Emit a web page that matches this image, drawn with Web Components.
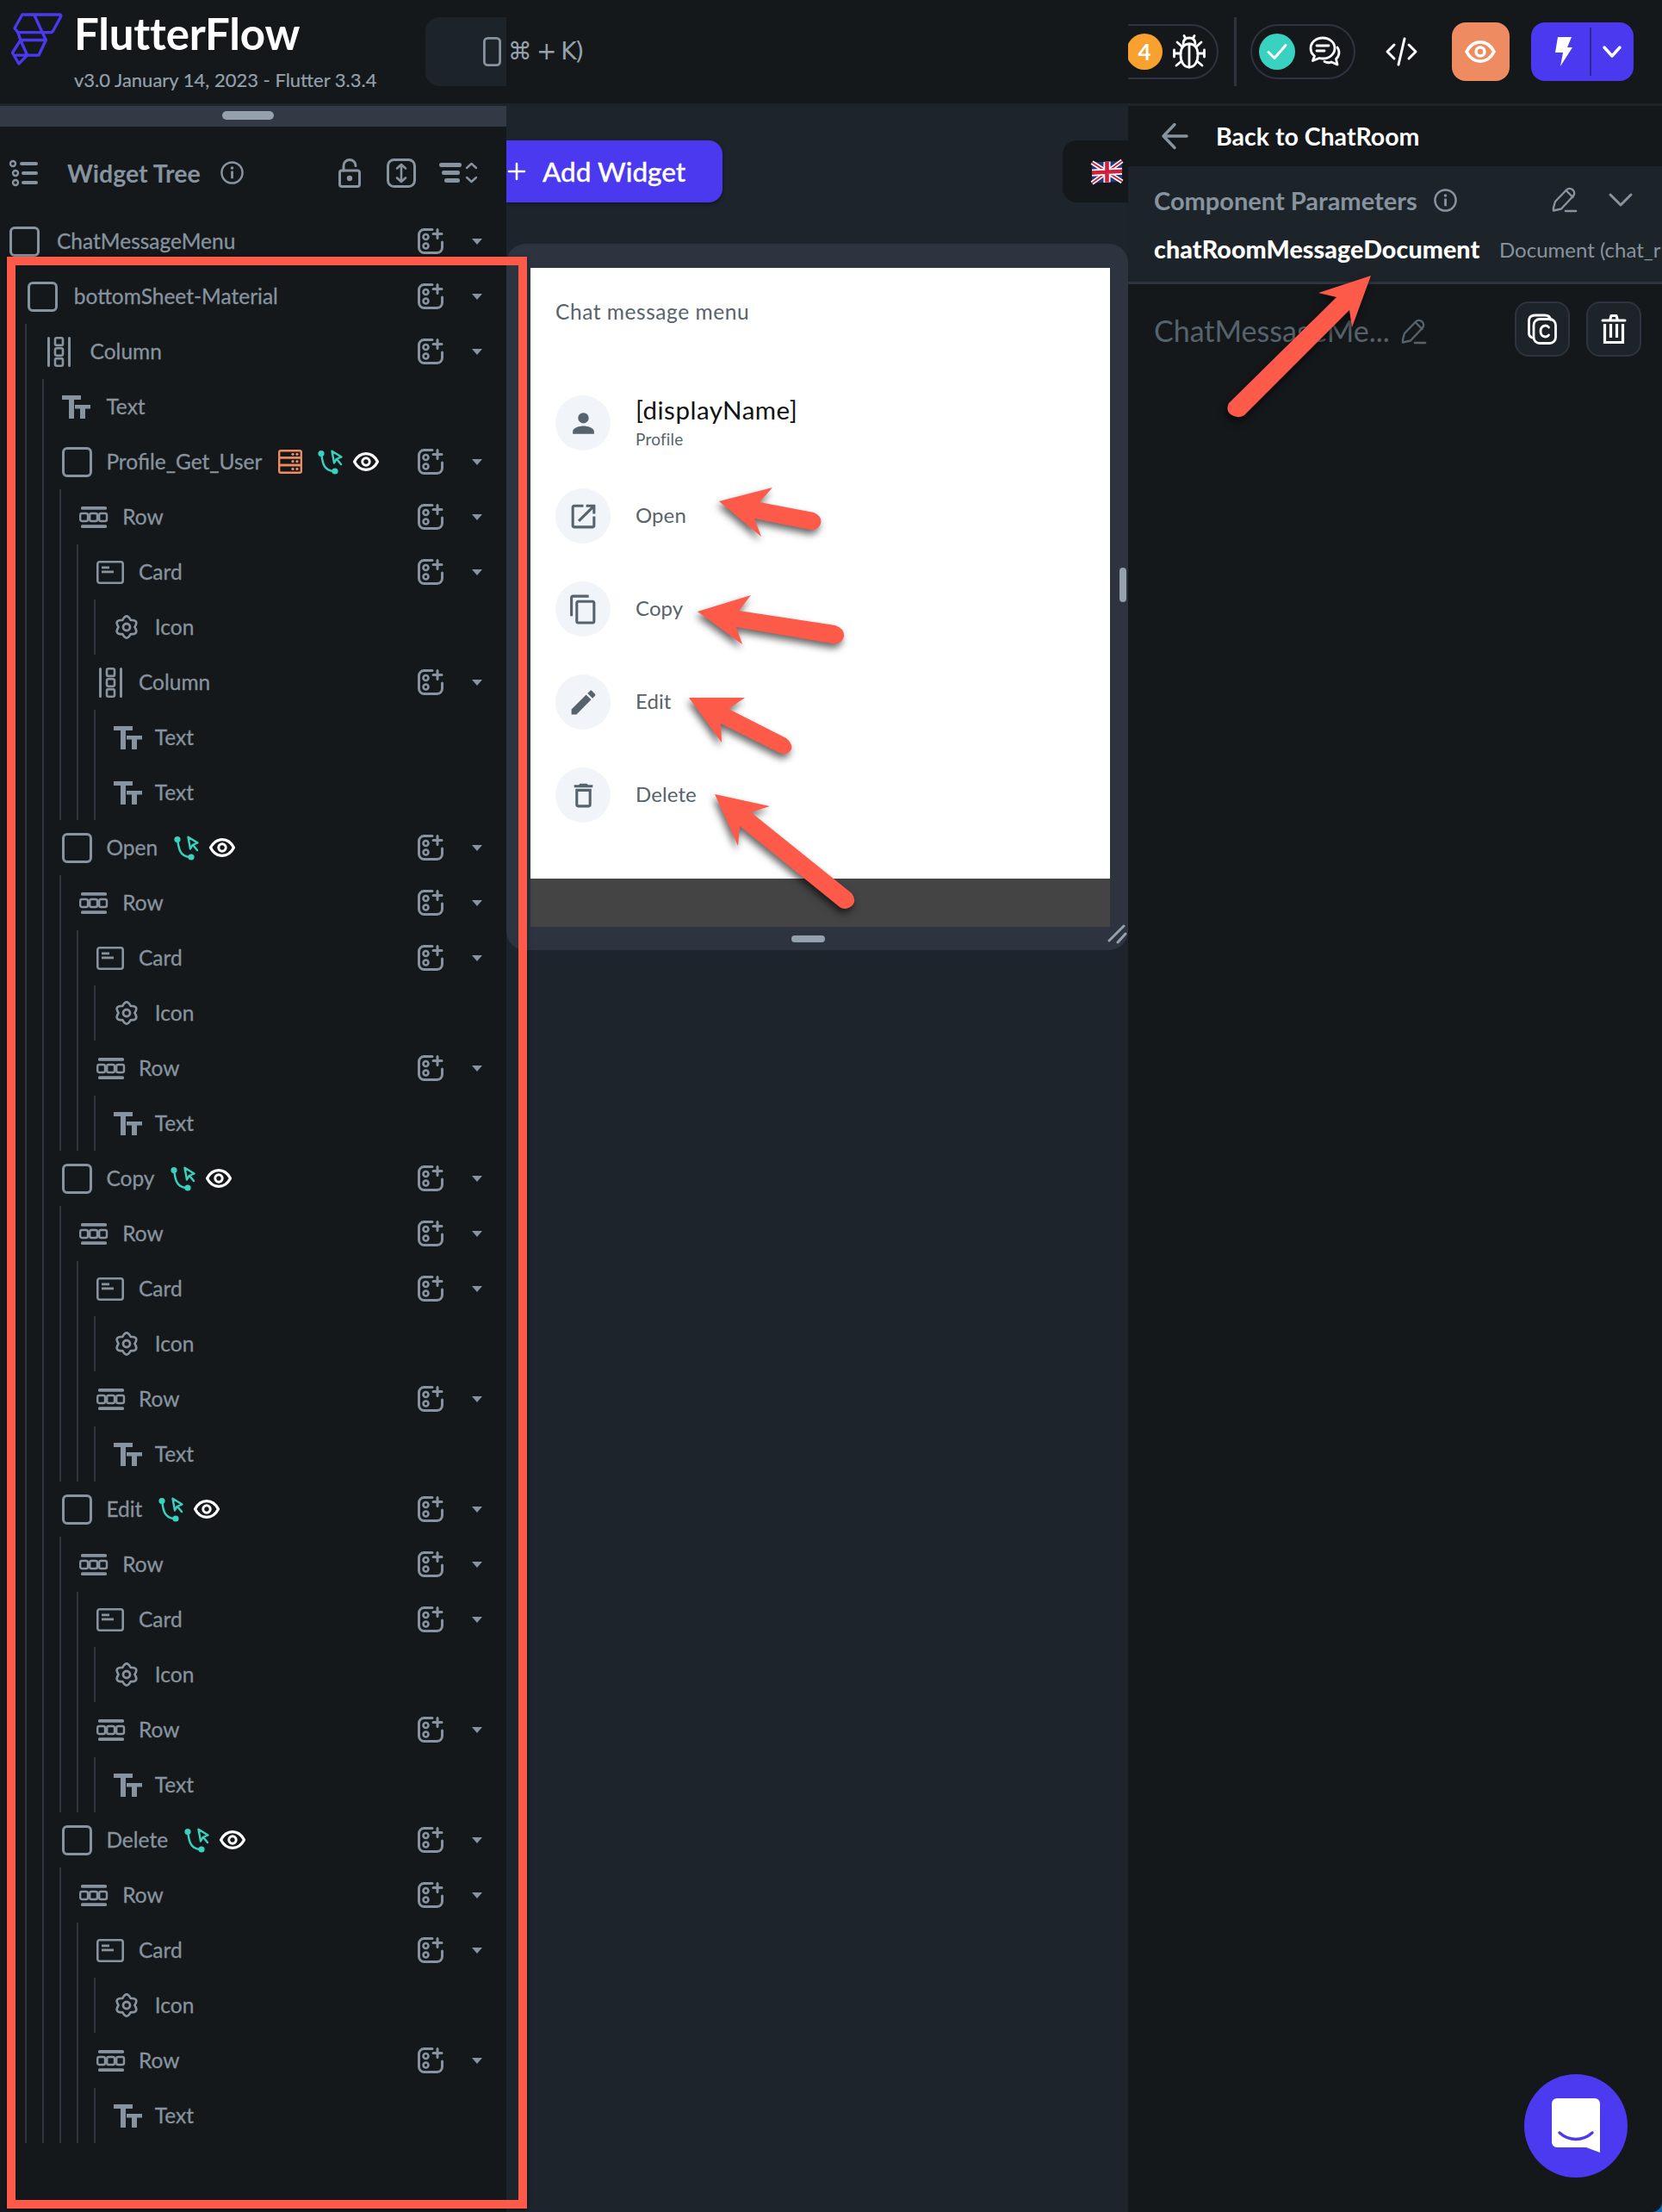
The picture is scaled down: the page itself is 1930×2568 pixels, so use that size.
<!DOCTYPE html>
<html>
<head>
<meta charset="utf-8">
<title>FlutterFlow</title>
<style>
html,body{margin:0;padding:0;background:#0f6cb4}
body{width:1930px;height:2568px;overflow:hidden;position:relative;font-family:"Lato","Noto Sans",sans-serif}
</style>
</head>
<body>
<ff-app>
  <ff-topbar slot="top"></ff-topbar>
  <ff-tree-panel slot="left">
    <tree-node kind="check" label="ChatMessageMenu" lvl="0">
      <tree-node kind="check" label="bottomSheet-Material" lvl="1">
        <tree-node kind="column" label="Column" lvl="2">
          <tree-node kind="text" label="Text" lvl="3" leaf></tree-node>
          <tree-node kind="check" label="Profile_Get_User" lvl="3" badges="server action eye">
            <tree-node kind="row" label="Row" lvl="4">
              <tree-node kind="card" label="Card" lvl="5"><tree-node kind="gear" label="Icon" lvl="6" leaf></tree-node></tree-node>
              <tree-node kind="column" label="Column" lvl="5">
                <tree-node kind="text" label="Text" lvl="6" leaf></tree-node>
                <tree-node kind="text" label="Text" lvl="6" leaf></tree-node>
              </tree-node>
            </tree-node>
          </tree-node>
          <tree-node kind="check" label="Open" lvl="3" badges="action eye">
            <tree-node kind="row" label="Row" lvl="4">
              <tree-node kind="card" label="Card" lvl="5"><tree-node kind="gear" label="Icon" lvl="6" leaf></tree-node></tree-node>
              <tree-node kind="row" label="Row" lvl="5"><tree-node kind="text" label="Text" lvl="6" leaf></tree-node></tree-node>
            </tree-node>
          </tree-node>
          <tree-node kind="check" label="Copy" lvl="3" badges="action eye">
            <tree-node kind="row" label="Row" lvl="4">
              <tree-node kind="card" label="Card" lvl="5"><tree-node kind="gear" label="Icon" lvl="6" leaf></tree-node></tree-node>
              <tree-node kind="row" label="Row" lvl="5"><tree-node kind="text" label="Text" lvl="6" leaf></tree-node></tree-node>
            </tree-node>
          </tree-node>
          <tree-node kind="check" label="Edit" lvl="3" badges="action eye">
            <tree-node kind="row" label="Row" lvl="4">
              <tree-node kind="card" label="Card" lvl="5"><tree-node kind="gear" label="Icon" lvl="6" leaf></tree-node></tree-node>
              <tree-node kind="row" label="Row" lvl="5"><tree-node kind="text" label="Text" lvl="6" leaf></tree-node></tree-node>
            </tree-node>
          </tree-node>
          <tree-node kind="check" label="Delete" lvl="3" badges="action eye">
            <tree-node kind="row" label="Row" lvl="4">
              <tree-node kind="card" label="Card" lvl="5"><tree-node kind="gear" label="Icon" lvl="6" leaf></tree-node></tree-node>
              <tree-node kind="row" label="Row" lvl="5"><tree-node kind="text" label="Text" lvl="6" leaf></tree-node></tree-node>
            </tree-node>
          </tree-node>
        </tree-node>
      </tree-node>
    </tree-node>
  </ff-tree-panel>
  <ff-canvas slot="mid">
    <menu-item icon="mPerson" name="[displayName]" sub="Profile"></menu-item>
    <menu-item icon="mOpen" name="Open"></menu-item>
    <menu-item icon="mCopy" name="Copy"></menu-item>
    <menu-item icon="mEdit" name="Edit"></menu-item>
    <menu-item icon="mDelete" name="Delete"></menu-item>
  </ff-canvas>
  <ff-right-panel slot="right"></ff-right-panel>
</ff-app>
<ff-annotations></ff-annotations>
<ff-fab></ff-fab>

<script>
const G = '#87939e';
const s = (w) => `fill="none" stroke="currentColor" stroke-width="${w}" stroke-linecap="round" stroke-linejoin="round"`;

// name: [viewbox w, viewbox h, markup]
const ICONS = {
  logo: [60,62,`<g transform="translate(-15,-16)" fill="none" stroke="#4b39ef" stroke-width="3.4" stroke-linecap="round" stroke-linejoin="round"><path d="M27 17H71Q73.5 17 72.5 19.5L63.5 36Q62.5 38 60 38H22L18 33Z"/><path d="M41 17L55 47L46.5 65H20M22 38L25 47H55M25 47L15.5 62L23 75L32 66M25 47L33 65"/></g>`],
  phone: [21,34,`<rect x="1.4" y="1.4" width="18.2" height="31.2" rx="4" ${s(2.8)}/>`],
  list: [34,30,`<g ${s(2.4)}><circle cx="4" cy="4" r="3"/><circle cx="7" cy="15" r="3"/><circle cx="7" cy="26" r="3"/></g><g fill="currentColor"><rect x="12" y="2" width="21" height="4" rx="2"/><rect x="14" y="13" width="19" height="4" rx="2"/><rect x="14" y="24" width="19" height="4" rx="2"/></g>`],
  info: [28,28,`<circle cx="14" cy="14" r="12.5" ${s(2.6)}/><rect x="12.6" y="12" width="2.9" height="9" fill="currentColor"/><circle cx="14" cy="8.2" r="1.8" fill="currentColor"/>`],
  lock: [26,34,`<rect x="1.5" y="14" width="23" height="18.5" rx="2.5" ${s(3)}/><path d="M6 14V8.5a7 7 0 0 1 14 0" ${s(3)}/><circle cx="13" cy="23" r="3.2" fill="currentColor"/>`],
  updown: [34,34,`<rect x="1.5" y="1.5" width="31" height="31" rx="7" ${s(3)}/><path d="M17 7V27M12 11.5L17 7L22 11.5M12 22.5L17 27L22 22.5" ${s(2.6)}/>`],
  sort: [44,25,`<g fill="currentColor"><rect x="0" y="1" width="26" height="5" rx="2.2"/><rect x="3" y="10" width="21" height="5" rx="2.2"/><rect x="6" y="19" width="18" height="5" rx="2.2"/></g><path d="M32 7L37.5 2L43 7M32 18L37.5 23L43 18" ${s(2.4)}/>`],
  check: [35,35,`<rect x="1.5" y="1.5" width="32" height="32" rx="4.5" ${s(3)}/>`],
  column: [27,35,`<path d="M1.5 1.5V33.5M25.5 1.5V33.5" ${s(3)}/><g ${s(2.6)}><rect x="9" y="1.3" width="9" height="8.6" rx="2"/><rect x="9" y="13.2" width="9" height="8.6" rx="2"/><rect x="9" y="25.1" width="9" height="8.6" rx="2"/></g>`],
  row: [33,25,`<rect x="2" y="0" width="30" height="3.8" rx="1.5" fill="currentColor"/><rect x="2" y="21.2" width="30" height="3.8" rx="1.5" fill="currentColor"/><g ${s(2.4)}><rect x="1.2" y="8" width="8.8" height="9" rx="2"/><rect x="12.2" y="8" width="8.8" height="9" rx="2"/><rect x="23.2" y="8" width="8.8" height="9" rx="2"/></g>`],
  card: [32,27,`<rect x="1.3" y="1.3" width="29.4" height="24.4" rx="2.5" ${s(2.6)}/><rect x="6" y="6.5" width="9" height="2.8" fill="currentColor"/><rect x="6" y="11.5" width="14" height="2.8" fill="currentColor"/>`],
  gear: [30,30,`<path d="M9.75 5.9Q15 -3.9 20.25 5.9Q31.4 5.55 25.5 15Q31.4 24.45 20.25 24.1Q15 33.9 9.75 24.1Q-1.4 24.45 4.5 15Q-1.4 5.55 9.75 5.9Z" transform="translate(1.5,1.5) scale(.9)" ${s(3)}/><circle cx="15" cy="15" r="4" ${s(2.8)}/>`],
  text: [33,27,`<path fill="currentColor" d="M0 0H22V5H14V27H8V5H0ZM15 11H33V15.5H27V27H21V15.5H15Z"/>`],
  add: [30,30,`<path d="M17 1.5H7.5A6 6 0 0 0 1.5 7.5V22.5A6 6 0 0 0 7.5 28.5H22.5A6 6 0 0 0 28.5 22.5V16" ${s(3)}/><path d="M23 1.5V11.5M18 6.5H28" ${s(3)}/><circle cx="9.5" cy="10" r="3" ${s(2.6)}/><circle cx="9.5" cy="20.5" r="3" ${s(2.6)}/>`],
  server: [28,28,`<g ${s(2.4)}><rect x="1.2" y="1.2" width="25.6" height="8.2" rx="1.8"/><rect x="1.2" y="9.4" width="25.6" height="8.6" rx="0"/><rect x="1.2" y="18" width="25.6" height="8.8" rx="1.8"/></g><g fill="currentColor"><circle cx="17" cy="5.3" r="1.6"/><circle cx="22" cy="5.3" r="1.6"/><circle cx="17" cy="13.7" r="1.6"/><circle cx="22" cy="13.7" r="1.6"/><circle cx="17" cy="22.4" r="1.6"/><circle cx="22" cy="22.4" r="1.6"/></g>`],
  action: [30,29,`<circle cx="4" cy="4.5" r="3.6" fill="currentColor"/><circle cx="20" cy="25" r="3.6" fill="currentColor"/><path d="M4.5 7C5.5 15 7 24 18 25" ${s(2.4)}/><path d="M16.5 1.8L27.5 8.5L21.5 11L19 15.5ZM22 11L27 17" ${s(2.4)}/>`],
  eye: [30,22,`<path d="M1.5 11C8 -1.5 22 -1.5 28.5 11C22 23.5 8 23.5 1.5 11Z" ${s(3.2)}/><circle cx="15" cy="11" r="4.2" ${s(3)}/>`],
  arrowBack: [32,32,`<path d="M30 16H3M16 2.5L3 16L16 29.5" ${s(3.4)}/>`],
  pencil: [30,30,`<path d="M3 24L5 17L18 3.5C20 1.5 23 1.2 25.5 3.5C28 6 27.5 9 25.5 11L12 25.5L3 27.5ZM18 4.5L25.5 12" ${s(2.4)}/><path d="M17 28H29" ${s(2.6)}/>`],
  chevron: [28,16,`<path d="M2 2L14 14L26 2" ${s(3)}/>`],
  chevronW: [22,14,`<path d="M2 2L11 12L20 2" ${s(3.4)}/>`],
  copyC: [34,36,`<path d="M5 28C2.5 27 1.5 25 1.5 23V9C1.5 4.5 4 2 8.5 2H20C24 2 26 4 26.5 7" ${s(2.8)}/><rect x="7" y="6.5" width="25.5" height="28" rx="7" ${s(2.8)}/><path d="M24.5 16C22 12.5 15 13.5 15 20.5C15 27.5 22 28.5 24.5 25" ${s(2.8)}/>`],
  trash: [28,36,`<path d="M1 8H27M9.5 8L11 2.5H17L18.5 8" ${s(3)}/><path d="M3.5 12V33.5H24.5V12M10.5 12V28M17.5 12V28" fill="none" stroke="currentColor" stroke-width="3.2"/>`],
  bug: [38,40,`<path d="M19 11C11 11 9 17 9 24C9 32 13 38 19 38C25 38 29 32 29 24C29 17 27 11 19 11Z" ${s(2.8)}/><path d="M19 11V38M12 11C12 6 15 4 19 4C23 4 26 6 26 11M13 1.5L15 5M25 1.5L23 5M9 22H1.5M29 22H36.5M1.5 18V26M36.5 18V26M10 31L4 36M28 31L34 36M10.5 14L5 9M27.5 14L33 9" ${s(2.8)}/>`],
  checkMark: [24,20,`<path d="M2 10.5L9 17.5L22 2.5" ${s(3)}/>`],
  chats: [37,36,`<path d="M16 2C8 2 2 7.5 2 14C2 18 3.8 21 6.5 23L4.5 28.5L12 25.5C13.5 26 15 26 16 26C24 26 30 20.5 30 14C30 7.5 24 2 16 2Z" ${s(2.8)}/><path d="M9 11H23M9 17H18" ${s(2.8)}/><path d="M33 13C35 16 35.5 20 34 23C33.5 24.5 32.5 25.5 31.5 26.5L33 33L26 30C24 31 21 31 18 29.5" ${s(2.8)}/>`],
  code: [37,36,`<path d="M10 10L2 18L10 26M27 10L35 18L27 26M22 3L15 33" ${s(3)}/>`],
  bolt: [20,34,`<path fill="currentColor" d="M3 0H19L14 12H20L6 34L9 18H0Z"/>`],
  plus: [20,20,`<path d="M10 1V19M1 10H19" ${s(2.6)}/>`],
  flag: [35,26,`<g transform="skewY(-3) translate(0,1.6)"><rect width="35" height="24" fill="#26367a"/><path d="M0 0L35 24M35 0L0 24" stroke="#fff" stroke-width="5"/><path d="M0 0L35 24M35 0L0 24" stroke="#cf1f3d" stroke-width="1.8"/><path d="M17.5 0V24M0 12H35" stroke="#fff" stroke-width="8"/><path d="M17.5 0V24M0 12H35" stroke="#cf1f3d" stroke-width="4.6"/></g>`],
  mPerson: [24,24,`<path fill="currentColor" d="M12 12c2.21 0 4-1.79 4-4s-1.79-4-4-4-4 1.79-4 4 1.79 4 4 4zm0 2c-2.67 0-8 1.34-8 4v2h16v-2c0-2.66-5.33-4-8-4z"/>`],
  mOpen: [24,24,`<path fill="currentColor" d="M19 19H5V5h7V3H5c-1.11 0-2 .9-2 2v14c0 1.1.89 2 2 2h14c1.1 0 2-.9 2-2v-7h-2v7zM14 3v2h3.59l-9.83 9.83 1.41 1.41L19 6.41V10h2V3h-7z"/>`],
  mCopy: [24,24,`<path fill="currentColor" d="M16 1H4c-1.1 0-2 .9-2 2v14h2V3h12V1zm3 4H8c-1.1 0-2 .9-2 2v14c0 1.1.9 2 2 2h11c1.1 0 2-.9 2-2V7c0-1.1-.9-2-2-2zm0 16H8V7h11v14z"/>`],
  mEdit: [24,24,`<path fill="currentColor" d="M3 17.25V21h3.75L17.81 9.94l-3.75-3.75L3 17.25zM20.71 7.04c.39-.39.39-1.02 0-1.41l-2.34-2.34c-.39-.39-1.02-.39-1.41 0l-1.83 1.83 3.75 3.75 1.83-1.83z"/>`],
  mDelete: [24,24,`<path fill="currentColor" d="M6 19c0 1.1.9 2 2 2h8c1.1 0 2-.9 2-2V7H6v12zM8 9h8v10H8V9zm7.5-5l-1-1h-5l-1 1H5v2h14V4z"/>`],
  bubble: [56,63,`<path fill="#fff" d="M6 0H50A6 6 0 0 1 56 6V63L40 57H6A6 6 0 0 1 0 51V6A6 6 0 0 1 6 0Z"/><path d="M9 40C20 50 36 50 47 40" fill="none" stroke="#4c3af0" stroke-width="3.4" stroke-linecap="round"/>`]
};

// shared icon element, size from its attributes
class FfIcon extends HTMLElement {
  connectedCallback() {
    const [w, h, body] = ICONS[this.getAttribute('name')];
    const width = this.getAttribute('w') || w;
    const height = this.getAttribute('h') || h;
    this.attachShadow({mode:'open'}).innerHTML = `
      <style>:host{display:inline-flex;flex:none;line-height:0}svg{display:block;overflow:visible}</style>
      <svg width="${width}" height="${height}" viewBox="0 0 ${w} ${h}">${body}</svg>`;
  }
}
customElements.define('ff-icon', FfIcon);

class FfApp extends HTMLElement {
  constructor() {
    super();
    this.attachShadow({mode:'open'}).innerHTML = `
      <style>
        :host{display:grid;grid-template-columns:588px 722px 620px;grid-template-rows:123px 2445px;width:1930px;height:2568px;color:${G}}
        .top{grid-column:1/4}
      </style>
      <div class="top"><slot name="top"></slot></div>
      <slot name="left"></slot>
      <slot name="mid"></slot>
      <slot name="right"></slot>`;
  }
}
customElements.define('ff-app', FfApp);

class FfTopbar extends HTMLElement {
  constructor() {
    super();
    this.attachShadow({mode:'open'}).innerHTML = `
      <style>
        :host{display:flex;height:120px;background:#14181b;border-bottom:3px solid #1d2429;color:${G}}
        .brand{width:494px;box-sizing:border-box;padding:16px 0 0 14px;display:flex;gap:13px}
        .brand .txt{display:flex;flex-direction:column}
        .name{font-size:51px;font-weight:700;color:#fff;line-height:44px;margin-top:1px;letter-spacing:-.2px}
        .ver{font-size:22px;line-height:28px;margin-top:18px;color:#95a1ac;white-space:nowrap;-webkit-text-stroke:.2px #95a1ac}
        .search{width:94px;height:80px;margin-top:20px;background:#1d2429;border-radius:16px 0 0 16px;box-sizing:border-box;padding:23px 0 0 67px}
        .kbd{width:722px;box-sizing:border-box;padding:0 0 0 2px;font-size:28px;line-height:120px;color:#95a1ac;font-family:"DejaVu Sans","Lato",sans-serif;letter-spacing:-2px;white-space:nowrap}
        .right{width:620px;overflow:hidden;display:flex;align-items:center;position:relative}
        .pill{height:64px;box-sizing:border-box;border:2.5px solid #2d343f;border-radius:32px;display:flex;align-items:center;flex:none}
        .bug{width:137px;margin-left:-32px;padding-left:28px}
        .dot{width:42px;height:42px;border-radius:50%;display:flex;align-items:center;justify-content:center;flex:none}
        .bug .dot{background:#f9a12e;color:#fff;font-weight:700;font-size:26px}
        .bug ff-icon{margin-left:12px;color:#fff}
        .divider{width:2.5px;height:80px;background:#2d343f;margin-left:18px;flex:none}
        .ok{width:122px;margin-left:16px;padding-left:8px}
        .ok .dot{background:#39d2c0;color:#fff}
        .ok .chat{margin-left:16px;color:#fff}
        .code{color:#fff;margin-left:35px}
        .prev{width:67px;height:68px;background:#ee8b60;border-radius:16px;margin-left:40px;display:flex;align-items:center;justify-content:center;color:#fff;flex:none}
        .run{width:119px;height:68px;background:#4b39ef;border-radius:16px;margin-left:25px;display:flex;align-items:center;color:#fff;flex:none;position:relative}
        .run .b{width:68px;display:flex;justify-content:center;padding-left:9px;box-sizing:border-box}
        .run .sep{width:2px;height:56px;background:#2c2696}
        .run .c{flex:1;display:flex;justify-content:center}
      </style>
      <div class="brand">
        <ff-icon name="logo" w="59" h="61"></ff-icon>
        <div class="txt"><span class="name">FlutterFlow</span><span class="ver">v3.0 January 14, 2023 - Flutter 3.3.4</span></div>
      </div>
      <div class="search"><ff-icon name="phone"></ff-icon></div>
      <div class="kbd">⌘ + K)</div>
      <div class="right">
        <div class="pill bug"><div class="dot">4</div><ff-icon name="bug"></ff-icon></div>
        <div class="divider"></div>
        <div class="pill ok"><div class="dot"><ff-icon name="checkMark"></ff-icon></div><ff-icon class="chat" name="chats"></ff-icon></div>
        <ff-icon class="code" name="code"></ff-icon>
        <div class="prev"><ff-icon name="eye" w="36" h="26"></ff-icon></div>
        <div class="run"><div class="b"><ff-icon name="bolt"></ff-icon></div><div class="sep"></div><div class="c"><ff-icon name="chevronW"></ff-icon></div></div>
      </div>`;
  }
}
customElements.define('ff-topbar', FfTopbar);

class FfTreePanel extends HTMLElement {
  constructor() {
    super();
    this.attachShadow({mode:'open'}).innerHTML = `
      <style>
        :host{display:block;background:#14181b;color:${G};width:588px;height:2445px;overflow:hidden;position:relative;z-index:1}
        .grab{height:24px;background:#323a46;display:flex;justify-content:center;align-items:center}
        .grab i{width:60px;height:10px;border-radius:5px;background:#95a1ac;margin:-2px 0 0 -12px}
        .head{height:101px;box-sizing:border-box;padding:6px 34px 0 11px;display:flex;align-items:center}
        .title{font-size:28.5px;font-weight:700;margin-left:33px;width:159px;white-space:nowrap}
        .head .i{margin-left:19px}
        .tools{margin-left:auto;display:flex;align-items:center;gap:30px}
        .tools .u{margin-right:-3px}
        .tree{padding-left:11px}
      </style>
      <div class="grab"><i></i></div>
      <div class="head">
        <ff-icon name="list"></ff-icon><span class="title">Widget Tree</span><ff-icon class="i" name="info" w="27" h="27"></ff-icon>
        <div class="tools"><ff-icon name="lock"></ff-icon><ff-icon class="u" name="updown"></ff-icon><ff-icon name="sort"></ff-icon></div>
      </div>
      <div class="tree"><slot></slot></div>`;
  }
}
customElements.define('ff-tree-panel', FfTreePanel);

class TreeNode extends HTMLElement {
  connectedCallback() {
    const lvl = +this.getAttribute('lvl');
    const kind = this.getAttribute('kind');
    const leaf = this.hasAttribute('leaf');
    const badges = (this.getAttribute('badges') || '').split(' ').filter(Boolean);
    const badgeHtml = badges.map(b => `<ff-icon class="b-${b}" name="${b}"></ff-icon>`).join('');
    this.attachShadow({mode:'open'}).innerHTML = `
      <style>
        :host{display:block;color:${G}}
        .row{height:64px;display:flex;align-items:center}
        .ic{width:${55 - lvl * 1.2}px;flex:none;display:flex;box-sizing:border-box;padding-left:${kind === 'column' ? 3 : 0}px}
        .lb{font-size:24.5px;line-height:30px;margin-top:-1px;white-space:nowrap;-webkit-text-stroke:.3px ${G}}
        .badges{display:flex;align-items:center;margin-left:19px;gap:11px}
        .b-server{color:#ee8b60;margin-right:7px}
        .b-action{color:#39d2c0}
        .b-eye{color:#fff}
        .end{margin-left:auto;display:flex;align-items:center;padding-right:28px}
        .car{width:0;height:0;border:6px solid transparent;border-top:7px solid ${G};border-bottom:0;margin-left:33px}
        .kids{margin-left:${lvl === 0 ? 21 : -3.5}px;padding-left:${lvl === 0 ? 0 : 21.5}px;border-left:${lvl === 0 ? 0 : 2}px solid #2d343f}
        .kids.none{display:none}
      </style>
      <div class="row">
        <div class="ic"><ff-icon name="${kind}"></ff-icon></div>
        <span class="lb">${this.getAttribute('label')}</span>
        <div class="badges">${badgeHtml}</div>
        ${leaf ? '' : `<div class="end"><ff-icon name="add"></ff-icon><div class="car"></div></div>`}
      </div>
      <div class="kids ${leaf ? 'none' : ''}"><slot></slot></div>`;
  }
}
customElements.define('tree-node', TreeNode);

class FfCanvas extends HTMLElement {
  constructor() {
    super();
    this.attachShadow({mode:'open'}).innerHTML = `
      <style>
        :host{display:block;background:#1e242c;width:722px;height:2445px;box-sizing:border-box;padding-top:40px}
        .bar{display:flex;justify-content:space-between;height:72px}
        .add{width:251px;background:#4b39ef;border-radius:0 16px 16px 0;display:flex;align-items:center;color:#fff;font-size:31.5px;font-weight:500;-webkit-text-stroke:.3px #fff;box-shadow:0 2px 4px #0006;box-sizing:border-box;padding-left:2px}
        .add span{margin-left:20px;white-space:nowrap}
        .lang{width:76px;background:#14181b;border-radius:16px 0 0 16px;box-sizing:border-box;padding:24px 0 0 34px}
        .phone{margin-top:48px;height:820px;background:#2d343f;border-radius:22px;box-sizing:border-box;padding:28px 21px 27px 28px;position:relative;display:flex;flex-direction:column}
        .screen{height:709px;background:#fff;box-sizing:border-box;padding:35px 0 0 29px;color:#57636c}
        .title{font-size:24.5px;line-height:32px;letter-spacing:.55px}
        .list{margin-top:81px;display:flex;flex-direction:column;gap:44px}
        .kb{height:56px;background:#444}
        .pull{position:absolute;left:331px;bottom:9px;width:39px;height:8px;border-radius:4px;background:#95a1ac}
        .scroll{position:absolute;right:2px;top:376px;width:8px;height:40px;border-radius:4px;background:#95a1ac}
        .size{position:absolute;right:1px;bottom:7px}
      </style>
      <div class="bar">
        <div class="add"><ff-icon name="plus"></ff-icon><span>Add Widget</span></div>
        <div class="lang"><ff-icon name="flag"></ff-icon></div>
      </div>
      <div class="phone">
        <div class="screen"><div class="title">Chat message menu</div><div class="list"><slot></slot></div></div>
        <div class="kb"></div>
        <div class="pull"></div>
        <div class="scroll"></div>
        <svg class="size" width="23" height="23" viewBox="0 0 23 23"><path d="M2 19L19 2M12 21L21 11" fill="none" stroke="#95a1ac" stroke-width="3" stroke-linecap="round"/></svg>
      </div>`;
  }
}
customElements.define('ff-canvas', FfCanvas);

class MenuItem extends HTMLElement {
  connectedCallback() {
    const sub = this.getAttribute('sub');
    this.attachShadow({mode:'open'}).innerHTML = `
      <style>
        :host{display:flex;align-items:center;height:64px}
        .c{width:64px;height:64px;border-radius:50%;background:#f1f4f8;color:#57636c;display:flex;align-items:center;justify-content:center;flex:none}
        .t{margin-left:29px;display:flex;flex-direction:column}
        .n{font-size:24px;color:#57636c;letter-spacing:.1px;line-height:30px;margin-top:-2px}
        .big{font-size:29.5px;color:#101213;line-height:34px;letter-spacing:.5px}
        .sub{font-size:19px;color:#57636c;line-height:22px;margin-top:6px;letter-spacing:.2px}
      </style>
      <div class="c"><ff-icon name="${this.getAttribute('icon')}" w="37" h="37"></ff-icon></div>
      <div class="t">
        <span class="n ${sub ? 'big' : ''}">${this.getAttribute('name')}</span>
        ${sub ? `<span class="sub">${sub}</span>` : ''}
      </div>`;
  }
}
customElements.define('menu-item', MenuItem);

class FfRightPanel extends HTMLElement {
  constructor() {
    super();
    this.attachShadow({mode:'open'}).innerHTML = `
      <style>
        :host{display:block;background:#14181b;width:620px;height:2445px;overflow:hidden;color:${G};border-radius:0 0 12px 0}
        .back{height:70px;display:flex;align-items:center;padding-left:38px;box-sizing:border-box}
        .back span{color:#fff;font-size:28.5px;font-weight:700;margin-left:32px;white-space:nowrap}
        .params{height:137px;background:#1d2429;border-bottom:3px solid #2d343f;box-sizing:border-box;padding:0 34px 0 30px}
        .ph{height:78px;display:flex;align-items:center}
        .ph b{font-size:29px;font-weight:700;white-space:nowrap;width:325px}
        .ph .ed{margin-left:auto}
        .ph .ch{margin-left:37px}
        .val{display:flex;align-items:center;white-space:nowrap;height:36px;width:590px;overflow:hidden}
        .val b{color:#fff;font-size:28.6px;font-weight:900;width:401px;flex:none;letter-spacing:.1px}
        .val span{font-size:24px}
        .inst{display:flex;align-items:center;padding:20px 24px 0 30px}
        .inst .nm{font-size:34px;color:#57636c;white-space:nowrap;width:286px;margin-top:2px}
        .inst .pn{color:#57636c;margin-top:6px}
        .btn{width:64px;height:64px;box-sizing:border-box;background:#1d2429;border:2.5px solid #2d343f;border-radius:16px;display:flex;align-items:center;justify-content:center;color:#fff;flex:none}
        .btn.first{margin-left:auto}
        .btn.last{margin-left:19px}
      </style>
      <div class="back"><ff-icon name="arrowBack"></ff-icon><span>Back to ChatRoom</span></div>
      <div class="params">
        <div class="ph"><b>Component Parameters</b><ff-icon name="info" w="27" h="27"></ff-icon><ff-icon class="ed" name="pencil"></ff-icon><ff-icon class="ch" name="chevron"></ff-icon></div>
        <div class="val"><b>chatRoomMessageDocument</b><span>Document (chat_r</span></div>
      </div>
      <div class="inst">
        <span class="nm">ChatMessageMe...</span><ff-icon class="pn" name="pencil"></ff-icon>
        <div class="btn first"><ff-icon name="copyC"></ff-icon></div>
        <div class="btn last"><ff-icon name="trash"></ff-icon></div>
      </div>`;
  }
}
customElements.define('ff-right-panel', FfRightPanel);

// red markup drawn over the screenshot: frame round the tree + arrows
class FfAnnotations extends HTMLElement {
  constructor() {
    super();
    this.attachShadow({mode:'open'}).innerHTML = `
      <style>
        :host{position:absolute;left:0;top:0;width:1930px;height:2568px;pointer-events:none;z-index:5}
        .frame{position:absolute;left:8px;top:298px;width:604px;height:2266px;box-sizing:border-box;border:10px solid #fd5a4a;box-shadow:0 1px 4px #0008}
        svg{position:absolute;left:0;top:0}
        path{fill:#fd5a4a;filter:drop-shadow(-2px 5px 4px #0009)}
      </style>
      <div class="frame"></div>
      <svg width="1930" height="2568" viewBox="0 0 1930 2568">
        <path d="M835 582L897 566L882 583L945 595Q955 599 953 608Q950 616 941 615L876 602L884 623Z"/>
        <path d="M810 710L872 691L858 709L970 726Q981 730 980 739Q977 749 966 747L855 728L862 748Z"/>
        <path d="M800 810L865 810L846 823L913 857Q921 864 919 870Q914 878 905 874L837 840L838 862Z"/>
        <path d="M830 922L894 936L872 943L989 1037Q995 1045 990 1051Q982 1058 975 1053L859 959L857 982Z"/>
        <path d="M1592 320L1531 340L1552 345L1427 468Q1423 476 1429 481Q1437 487 1445 482L1567 360L1570 380Z"/>
      </svg>`;
  }
}
customElements.define('ff-annotations', FfAnnotations);

class FfFab extends HTMLElement {
  constructor() {
    super();
    this.attachShadow({mode:'open'}).innerHTML = `
      <style>
        :host{position:absolute;left:1770px;top:2408px;width:120px;height:120px;border-radius:50%;background:#4c3af0;display:flex;align-items:flex-start;justify-content:center;z-index:6;box-sizing:border-box;padding-top:28px}
      </style>
      <ff-icon name="bubble"></ff-icon>`;
  }
}
customElements.define('ff-fab', FfFab);
</script>
</body>
</html>
